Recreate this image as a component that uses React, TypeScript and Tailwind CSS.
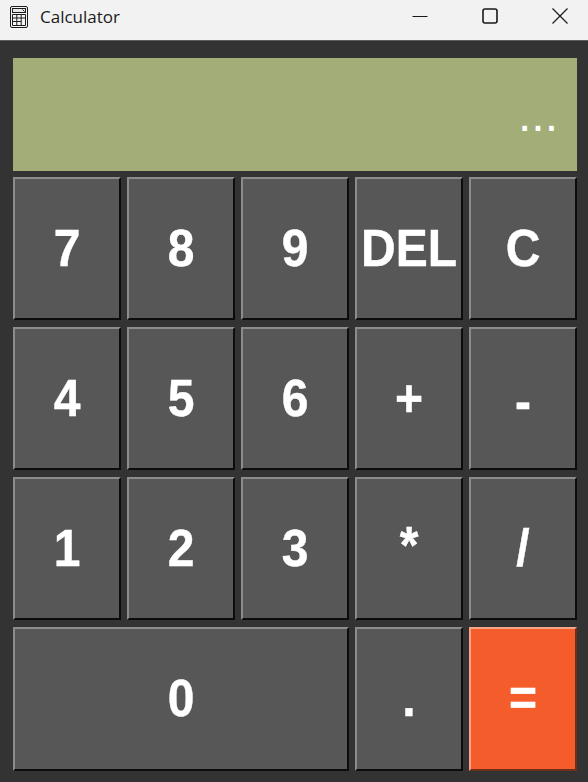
const btnBase =
  "flex items-center justify-center border-2 border-t-[#8c8c8c] border-l-[#8c8c8c] border-b-[#0c0c0c] border-r-[#0c0c0c] text-white font-bold text-[48px] leading-none";

const labelCls = "inline-block scale-y-[1.07] [-webkit-text-stroke:0.4px_white]";

const keys = [
  { label: "7" },
  { label: "8" },
  { label: "9" },
  { label: "DEL" },
  { label: "C" },
  { label: "4" },
  { label: "5" },
  { label: "6" },
  { label: "+" },
  { label: "-", extra: "pt-[6px]" },
  { label: "1" },
  { label: "2" },
  { label: "3" },
  { label: "*", extra: "pb-[6px]" },
  { label: "/" },
];

const CalcIcon = () => (
  <svg width="18" height="22" viewBox="0 0 18 22" fill="none" stroke="#1c1c1c" strokeWidth="1">
    <rect x="0.5" y="0.5" width="17" height="21" rx="1.5" fill="#f4f4f4" />
    <rect x="2.5" y="2.5" width="13" height="4" fill="#e8e8e8" />
    <path d="M12.5 3.5l2 2" />
    <path d="M2.5 8.5h13v11h-13z M2.5 12h13 M2.5 15.5h8.7 M6.8 8.5v11 M11.2 8.5v11" />
  </svg>
);

const App = () => {
  return (
    <div className="w-[588px] h-[782px] flex flex-col bg-[#333333] font-['Liberation_Sans',Arial,sans-serif] overflow-hidden">
      {/* barre de titre */}
      <div className="h-[41px] shrink-0 flex items-center bg-[#f2f2f2] border-b border-[#5c5c5c]">
        <div className="ml-[10px] mb-[6px] flex items-center">
          <CalcIcon />
        </div>
        <span className="ml-[12px] mb-[7px] text-[17px] text-[#1a1a1a] font-['Open_Sans',sans-serif]">Calculator</span>
        <div className="ml-auto flex items-center mb-[8px]">
          <svg width="16" height="16" viewBox="0 0 16 16" className="mr-[54px]" stroke="#1a1a1a" fill="none">
            <path d="M0.5 8.5h15" />
          </svg>
          <svg width="16" height="16" viewBox="0 0 16 16" className="mr-[54px]" stroke="#1a1a1a" strokeWidth="1.6" fill="none">
            <rect x="1" y="1" width="14" height="14" rx="2" />
          </svg>
          <svg width="16" height="16" viewBox="0 0 16 16" className="mr-[20px]" stroke="#1a1a1a" strokeWidth="1.2" fill="none">
            <path d="M0.5 0.5l15 15M15.5 0.5l-15 15" />
          </svg>
        </div>
      </div>

      <div className="flex flex-col pl-[13px] pt-[17px]">
        {/* écran */}
        <div className="w-[564px] h-[113px] bg-[#a3ad78] flex items-end justify-end pr-[19px] pb-[32px] text-white text-[48px] leading-none">
          ...
        </div>

        {/* touches */}
        <div className="mt-[6px] grid grid-cols-[repeat(5,108px)] grid-rows-[143px_143px_143px_144px] gap-x-[6px] gap-y-[7px]">
          {keys.map((k) => (
            <button key={k.label} className={`${btnBase} bg-[#575757] ${k.extra ?? ""}`}>
              <span className={labelCls}>{k.label}</span>
            </button>
          ))}
          <button className={`${btnBase} bg-[#575757] col-span-3`}>
            <span className={labelCls}>0</span>
          </button>
          <button className={`${btnBase} bg-[#575757]`}>
            <span className={labelCls}>.</span>
          </button>
          <button className="flex items-center justify-center border-2 border-t-[#f5a488] border-l-[#f5a488] border-b-[#6e3018] border-r-[#6e3018] bg-[#f45c2c] text-white font-bold text-[48px] leading-none">
            <span className={labelCls}>=</span>
          </button>
        </div>
      </div>
    </div>
  );
};

export default App;
